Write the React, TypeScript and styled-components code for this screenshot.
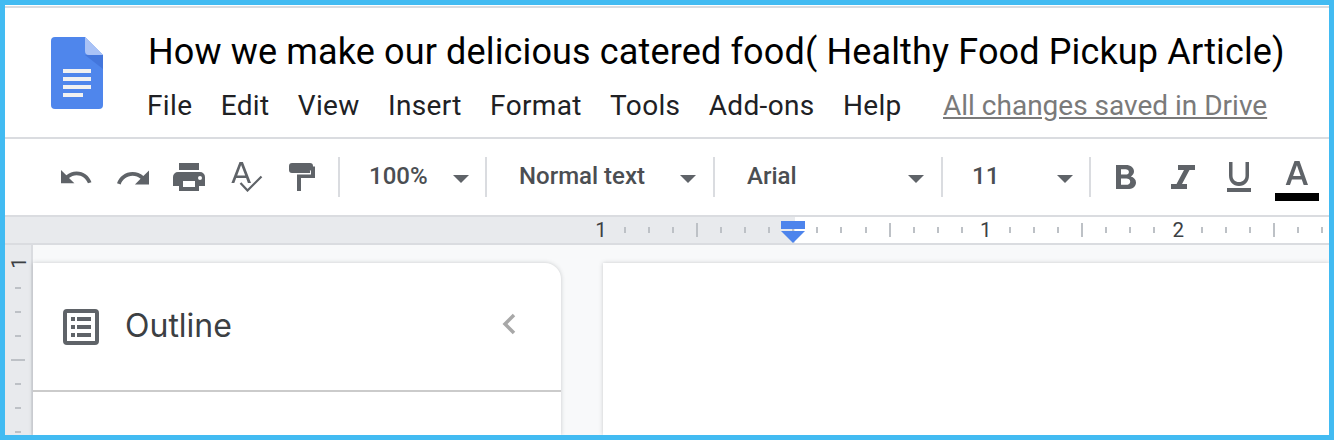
import React from "react";
import styled, { createGlobalStyle } from "styled-components";

const Global = createGlobalStyle`
  html, body { margin: 0; padding: 0; background: #fff; }
`;

const Frame = styled.div`
  box-sizing: border-box;
  width: 1334px;
  height: 440px;
  border: 5px solid #42bbf2;
  padding-top: 1px;
  background: #fff;
  overflow: hidden;
  display: flex;
  flex-direction: column;
  font-family: Roboto, "Liberation Sans", sans-serif;
`;

const Header = styled.header`
  box-sizing: border-box;
  height: 133px;
  flex: none;
  border-top: 2px solid #dadce0;
  border-bottom: 2px solid #dadce0;
  display: flex;
  padding: 29px 0 0 46px;
`;

const Logo = styled.svg`
  width: 52px;
  height: 72px;
  flex: none;
`;

const HeaderText = styled.div`
  margin-left: 45px;
  display: flex;
  flex-direction: column;
`;

const Title = styled.div`
  margin-top: -8px;
  font-size: 36px;
  line-height: 46px;
  color: #000;
  white-space: nowrap;
  letter-spacing: 0.14px;
`;

const Menu = styled.nav`
  display: flex;
  align-items: baseline;
  margin-top: 12px;
  margin-left: -1px;
`;

const MenuItem = styled.span`
  font-size: 28px;
  line-height: 38px;
  letter-spacing: 0.35px;
  color: #202124;
  margin-right: 28.3px;
  white-space: nowrap;
`;

const Saved = styled.span`
  font-size: 28px;
  line-height: 38px;
  color: #7a7a7a;
  text-decoration: underline;
  margin-left: 13px;
  white-space: nowrap;
`;

const Toolbar = styled.div`
  box-sizing: border-box;
  height: 78px;
  flex: none;
  border-bottom: 2px solid #dadce0;
  display: flex;
  align-items: center;
  padding-left: 56px;
  color: #5f6368;
`;

const IconSlot = styled.div<{ $w: number; $pad?: number }>`
  box-sizing: border-box;
  width: ${(p) => p.$w}px;
  padding-left: ${(p) => p.$pad ?? 0}px;
  flex: none;
  display: flex;
  align-items: center;
  height: 40px;
`;

const ColorSlot = styled.div`
  width: 44px;
  flex: none;
  margin-top: 8px;
`;

const Sep = styled.div`
  width: 2px;
  height: 40px;
  flex: none;
  background: #dadce0;
`;

const Select = styled.div<{ $w: number; $bold?: boolean }>`
  box-sizing: border-box;
  width: ${(p) => p.$w}px;
  flex: none;
  height: 40px;
  display: flex;
  align-items: center;
  justify-content: space-between;
  padding: 0 ${(p) => (p.$bold ? 17 : 16)}px 0 ${(p) => (p.$bold ? 32 : 29)}px;
  font-size: 24px;
  font-weight: 500;
  color: #4b4e52;
  white-space: nowrap;
`;

const SelectLabel = styled.span`
  position: relative;
  top: -1px;
`;

const Caret = styled.span`
  width: 0;
  height: 0;
  flex: none;
  margin-top: 3px;
  border-left: 8px solid transparent;
  border-right: 8px solid transparent;
  border-top: 8px solid #5f6368;
`;

const RulerBar = styled.div`
  box-sizing: border-box;
  position: relative;
  height: 28px;
  flex: none;
  border-bottom: 2px solid #dadce0;
  padding-left: 584px;
  display: flex;
  align-items: center;
  background: linear-gradient(to right, #e8eaed 790px, #fff 790px);
  overflow: hidden;
`;

const HCell = styled.div`
  width: 24.05px;
  flex: none;
  height: 26px;
  display: flex;
  align-items: center;
  justify-content: center;
`;

const HTick = styled.div<{ $major?: boolean }>`
  width: 2px;
  height: ${(p) => (p.$major ? 14 : 6)}px;
  background: #bdc1c6;
`;

const RulerNum = styled.span`
  font-size: 20.5px;
  color: #3c4043;
`;

const Marker = styled.svg`
  position: absolute;
  left: 776px;
  top: 4px;
  width: 24px;
  height: 22px;
`;

const Body = styled.div`
  flex: 1;
  min-height: 0;
  display: flex;
`;

const VRuler = styled.div`
  box-sizing: border-box;
  width: 28px;
  flex: none;
  background: #e8eaed;
  border-right: 2px solid #dadce0;
  padding-top: 7px;
  overflow: hidden;
`;

const VCell = styled.div`
  height: 24px;
  display: flex;
  align-items: center;
  justify-content: center;
`;

const VTick = styled.div<{ $major?: boolean }>`
  width: ${(p) => (p.$major ? 14 : 6)}px;
  height: 2px;
  background: #bdc1c6;
`;

const VNum = styled.span`
  font-size: 20.5px;
  line-height: 20px;
  color: #3c4043;
  transform: rotate(-90deg) translateX(1px) translateY(1px);
`;

const Workspace = styled.div`
  flex: 1;
  min-width: 0;
  background: #f8f9fa;
  padding-top: 18px;
  display: flex;
  gap: 42px;
`;

const Sidebar = styled.aside`
  width: 528px;
  flex: none;
  background: #fff;
  border-top-right-radius: 16px;
  box-shadow: 0 0 4px rgba(60, 64, 67, 0.25);
  display: flex;
  flex-direction: column;
`;

const SidebarHead = styled.div`
  box-sizing: border-box;
  height: 129px;
  flex: none;
  border-bottom: 2px solid #cbcbcb;
  display: flex;
  align-items: center;
  padding: 0 44px 0 30px;
`;

const OutlineText = styled.span`
  font-family: Inter, Roboto, sans-serif;
  font-size: 32px;
  color: #3c4043;
  margin-left: 26px;
  margin-top: -2px;
  flex: 1;
`;

const Chevron = styled.svg`
  margin-top: -6px;
  flex: none;
`;

const Page = styled.main`
  flex: 1;
  background: #fff;
  box-shadow: 0 0 4px rgba(60, 64, 67, 0.25);
`;

const Icon = styled.svg`
  display: block;
  fill: #5f6368;
`;

const hItems: ("n" | "m" | "t")[] = ["t", "t", "t", "m", "t", "t", "t", "t", "t", "t", "t", "m", "t", "t", "t", "n", "t", "t", "t", "m", "t", "t", "t", "n", "t", "t", "t", "m", "t", "t", "t"];

function HRuler() {
  let num = 0;
  return (
    <RulerBar>
      <HCell><RulerNum>1</RulerNum></HCell>
      {hItems.map((k, i) => {
        if (k === "n") num += 1;
        return (
          <HCell key={i}>
            {k === "n" ? <RulerNum>{num}</RulerNum> : <HTick $major={k === "m"} />}
          </HCell>
        );
      })}
      <Marker viewBox="0 0 24 22">
        <rect x="0" y="0" width="24" height="8" fill="#4d84ec" />
        <path d="M0 10h24L12 22z" fill="#4d84ec" />
      </Marker>
    </RulerBar>
  );
}

export default function App() {
  return (
    <Frame>
      <Global />
      <Header>
        <Logo viewBox="0 0 52 72">
          <path d="M4 0h30l18 18v50a4 4 0 0 1-4 4H4a4 4 0 0 1-4-4V4a4 4 0 0 1 4-4z" fill="#4f86ec" />
          <path d="M34 18l18 14V18z" fill="#3f6fd6" opacity="0.7" />
          <path d="M34 0l18 18H38a4 4 0 0 1-4-4z" fill="#a9c2f6" />
          <path d="M12 32h28v4H12zM12 40h28v4H12zM12 48h28v4H12zM12 56h20v4H12z" fill="#f1f1f1" />
        </Logo>
        <HeaderText>
          <Title>How we make our delicious catered food( Healthy Food Pickup Article)</Title>
          <Menu>
            {["File", "Edit", "View", "Insert", "Format", "Tools", "Add-ons", "Help"].map((m) => (
              <MenuItem key={m}>{m}</MenuItem>
            ))}
            <Saved>All changes saved in Drive</Saved>
          </Menu>
        </HeaderText>
      </Header>
      <Toolbar>
        <IconSlot $w={56}>
          <Icon width="32" height="32" viewBox="2 4 21.5 21.5">
            <path d="M12.5 11c-2.65 0-5.05.99-6.9 2.6L2 10v9h9l-3.62-3.62c1.39-1.16 3.16-1.88 5.12-1.88 3.54 0 6.55 2.31 7.6 5.5l2.37-.78C21.08 14.03 17.15 11 12.5 11z" />
          </Icon>
        </IconSlot>
        <IconSlot $w={56}>
          <Icon width="32" height="32" viewBox="1.540 4 20.460 20.460">
            <path d="M18.400 13.600C16.550 11.990 14.150 11 11.500 11c-4.650 0-8.580 3.030-9.960 7.220l2.360.78c1.050-3.190 4.050-5.500 7.600-5.500 1.950 0 3.730.72 5.120 1.880L13 19h9v-9l-3.600 3.600z" />
          </Icon>
        </IconSlot>
        <IconSlot $w={58}>
          <Icon width="32" height="28" viewBox="0 0 32 28">
            <path d="M6 0h20v7H6zM5 9h22a5 5 0 0 1 5 5v9h-6v5H6v-5H0v-9a5 5 0 0 1 5-5zm5 9v6h12v-6zm17-5a2 2 0 1 0 0 4 2 2 0 0 0 0-4z" fillRule="evenodd" />
          </Icon>
        </IconSlot>
        <IconSlot $w={58}>
          <Icon width="32" height="30" viewBox="0 0 32 30">
            <path d="M8.500 0h3.400L20 21h-3.100l-1.800-5H5.200l-1.900 5H.4zM6.200 13.400h8L10.100 3z" />
            <path d="M9.500 21l7 7.500L30.500 14.500" fill="none" stroke="#5f6368" strokeWidth="2.200" />
          </Icon>
        </IconSlot>
        <IconSlot $w={49}>
          <Icon width="26" height="28" viewBox="0 0 26 28">
            <path d="M3 0h18a3 3 0 0 1 3 3v.500h2V15H12v13H8V11.500h14V7.500h-1.200A3 3 0 0 1 21 10H3a3 3 0 0 1-3-3V3a3 3 0 0 1 3-3z" />
          </Icon>
        </IconSlot>
        <Sep />
        <Select $w={145}><SelectLabel>100%</SelectLabel><Caret /></Select>
        <Sep />
        <Select $w={226} $bold><SelectLabel>Normal text</SelectLabel><Caret /></Select>
        <Sep />
        <Select $w={226} $bold><SelectLabel>Arial</SelectLabel><Caret /></Select>
        <Sep />
        <Select $w={146}><SelectLabel>11</SelectLabel><Caret /></Select>
        <Sep />
        <IconSlot $w={80} $pad={25}>
          <Icon width="20" height="24" viewBox="0 0 20 24">
            <path d="M0 0h10c4.500 0 8 2.500 8 6.300 0 2.400-1.300 4.200-3.200 5.100 2.900.9 5.200 2.800 5.200 6 0 4.300-3.700 6.600-8.300 6.600H0zm5 4.200v5.400h4.500c2 0 3.400-1 3.400-2.700S11.500 4.200 9.500 4.200zm0 9.400v6.200h5.200c2.400 0 4-1.200 4-3.100s-1.600-3.100-4-3.100z" fillRule="evenodd" />
          </Icon>
        </IconSlot>
        <IconSlot $w={56}>
          <Icon width="24" height="24" viewBox="0 0 24 24">
            <path d="M7 0h17v5h-5.500L11 19h5v5H0v-5h5.500L13 5H7z" />
          </Icon>
        </IconSlot>
        <IconSlot $w={48}>
          <Icon width="24" height="30" viewBox="0 0 24 30">
            <path d="M2 0h3.500v13.500c0 4 2.500 6.500 6.500 6.500s6.500-2.500 6.500-6.500V0H22v13.500C22 19.500 18 24 12 24S2 19.500 2 13.500zM0 26h24v4H0z" />
          </Icon>
        </IconSlot>
        <ColorSlot>
          <Icon width="44" height="40" viewBox="0 0 44 40">
            <path d="M19.500 0h5l8.500 24h-4.300l-1.900-5.500H16.900L15 24h-4.300zM18.100 15h7.600L21.900 4.300z" />
            <rect x="0" y="32" width="44" height="8" fill="#000" />
          </Icon>
        </ColorSlot>
      </Toolbar>
      <HRuler />
      <Body>
        <VRuler>
          <VCell><VNum>1</VNum></VCell>
          {[0, 0, 0, 1, 0, 0, 0].map((m, i) => (
            <VCell key={i}><VTick $major={!!m} /></VCell>
          ))}
        </VRuler>
        <Workspace>
          <Sidebar>
            <SidebarHead>
              <Icon width="36" height="36" viewBox="0 0 36 36">
                <path fillRule="evenodd" d="M4 0h28a4 4 0 0 1 4 4v28a4 4 0 0 1-4 4H4a4 4 0 0 1-4-4V4a4 4 0 0 1 4-4zm0 4v28h28V4zM8 8h4v4H8zM14 8h14v4H14zM8 16h4v4H8zM14 16h14v4H14zM8 24h4v4H8zM14 24h14v4H14z" />
              </Icon>
              <OutlineText>Outline</OutlineText>
              <Chevron width="16" height="22" viewBox="0 0 16 22" fill="none">
                <path d="M13 2L4 11l9 9" stroke="#a8a8a8" strokeWidth="3.500" />
              </Chevron>
            </SidebarHead>
          </Sidebar>
          <Page />
        </Workspace>
      </Body>
    </Frame>
  );
}
